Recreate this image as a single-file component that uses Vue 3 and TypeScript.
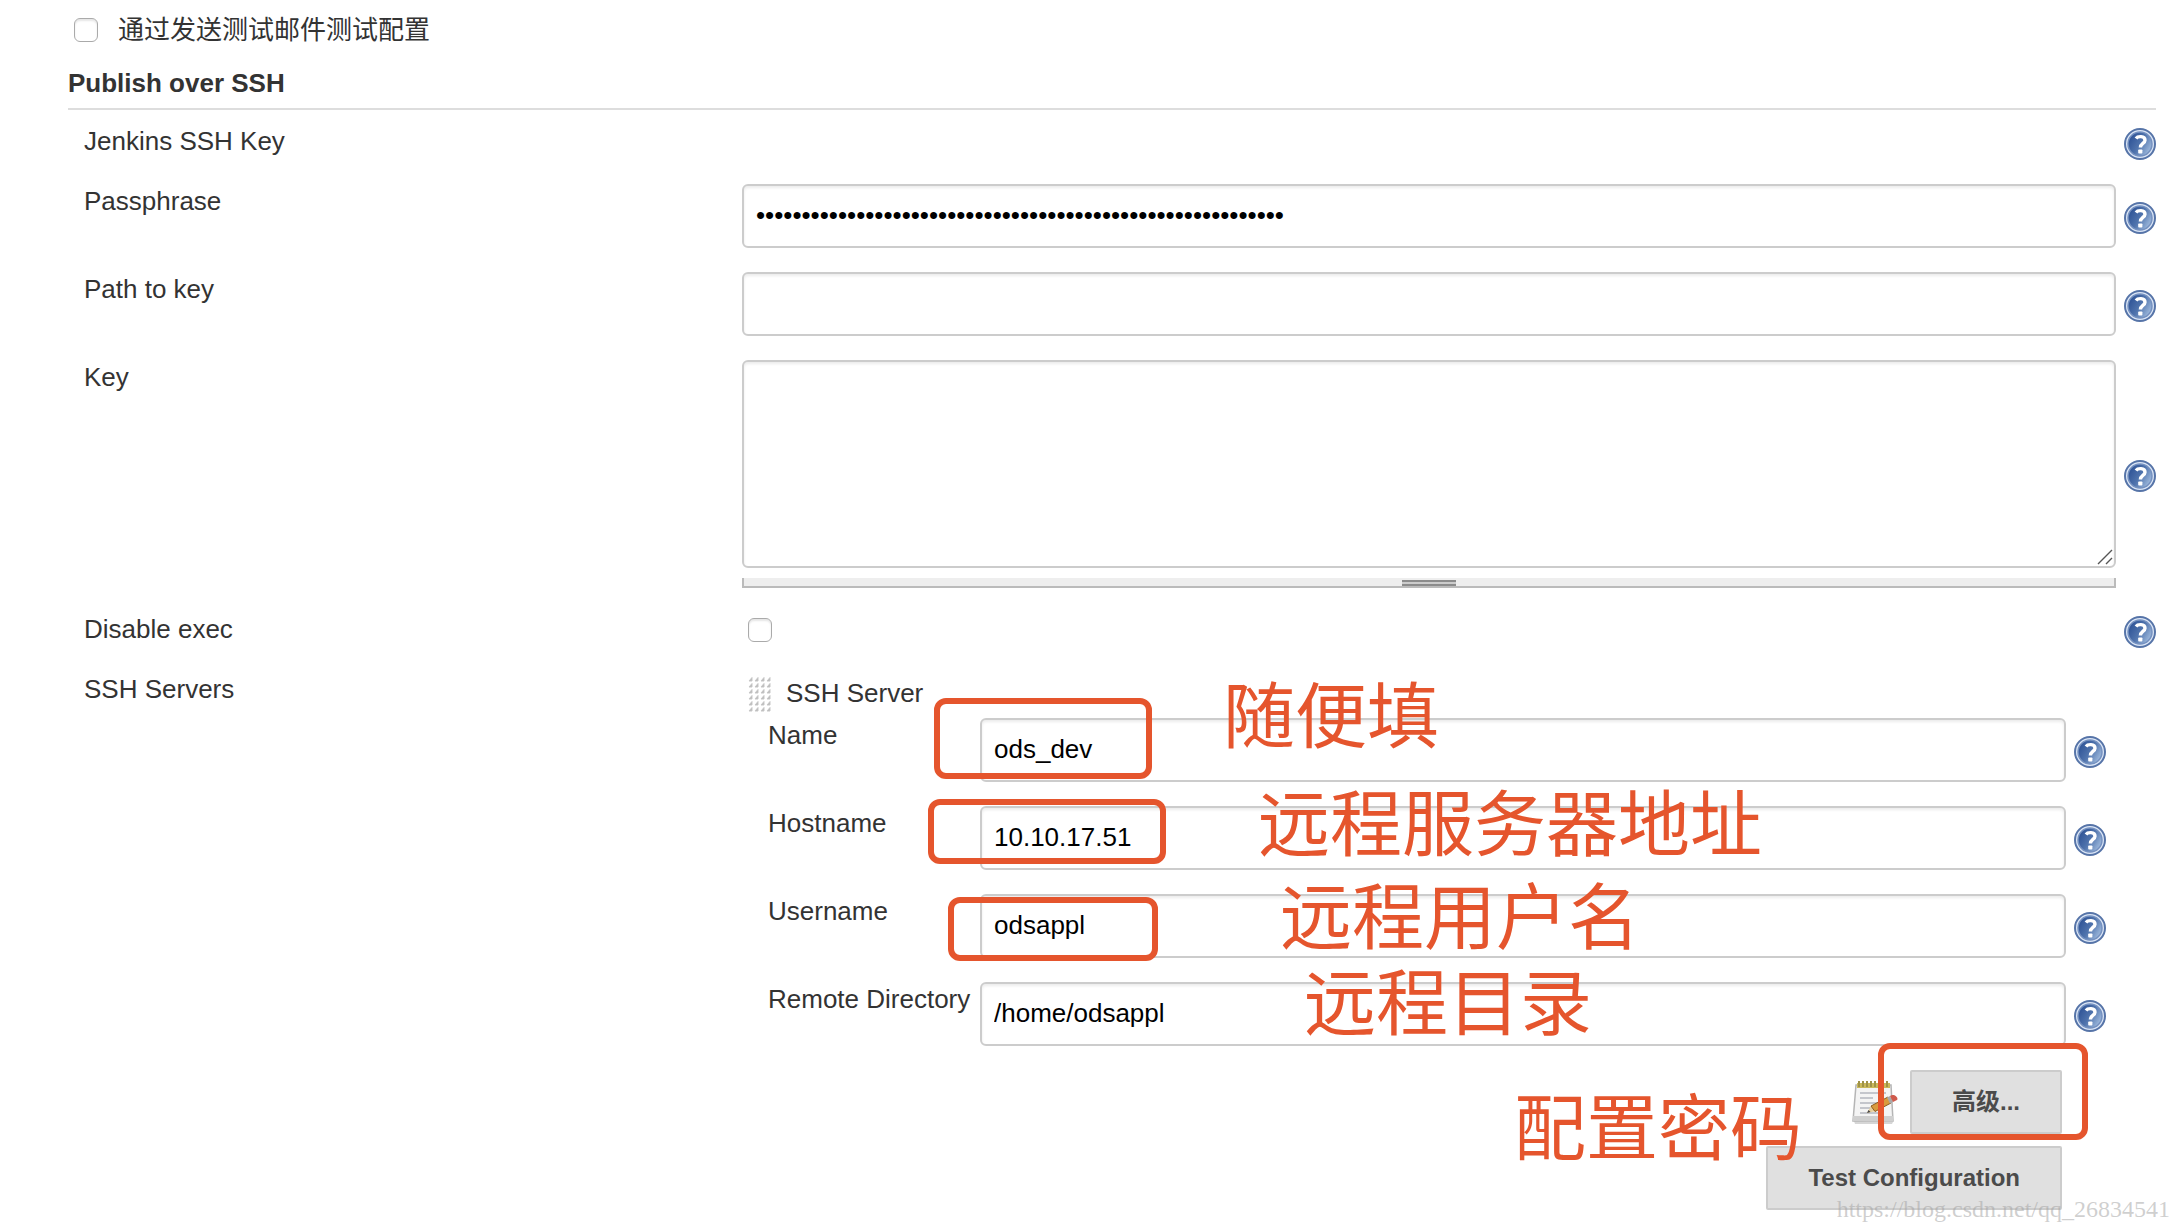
<script setup lang="ts">
import { h, reactive, ref } from 'vue'

interface ServerField {
  id: string
  label: string
  value: string
  note: string
  noteClass: string
  frameClass: string
}

const sendTestMail = ref(false)
const passphrase = ref('x'.repeat(58))
const keyPath = ref('')
const key = ref('')
const disableExec = ref(false)

const fields = reactive<ServerField[]>([
  { id: 'name', label: 'Name', value: 'ods_dev', note: '随便填', noteClass: 'note-name', frameClass: 'frame-name' },
  { id: 'hostname', label: 'Hostname', value: '10.10.17.51', note: '远程服务器地址', noteClass: 'note-host', frameClass: 'frame-host' },
  { id: 'username', label: 'Username', value: 'odsappl', note: '远程用户名', noteClass: 'note-user', frameClass: 'frame-user' },
  { id: 'remote-directory', label: 'Remote Directory', value: '/home/odsappl', note: '远程目录', noteClass: 'note-dir', frameClass: '' },
])

const HelpIcon = () =>
  h('svg', { viewBox: '0 0 32 32', width: 32, height: 32, 'aria-hidden': 'true' }, [
    h('circle', { cx: 16, cy: 16, r: 15, fill: '#dbe6f6', stroke: '#5674a8', 'stroke-width': 2 }),
    h('circle', { cx: 16, cy: 16, r: 12, fill: 'url(#help-fill)', stroke: '#7591c0', 'stroke-width': 1.5 }),
    h('path', {
      d: 'M12 10.4C13.6 8.2 21 7.4 21 12.2C21 15.6 16.4 15.4 16.4 19.6',
      fill: 'none',
      stroke: '#fff',
      'stroke-width': 3.4,
    }),
    h('rect', { x: 14.2, y: 21.4, width: 4.2, height: 4.2, rx: 0.8, fill: '#fff' }),
  ])
</script>

<template>
  <form class="page" @submit.prevent>
    <svg class="defs" width="0" height="0" aria-hidden="true">
      <defs>
        <linearGradient id="help-fill" x1="0" y1="0.2" x2="1" y2="0.8">
          <stop offset="0" stop-color="#2a4f93" />
          <stop offset="0.5" stop-color="#5074ad" />
          <stop offset="1" stop-color="#a9c3e3" />
        </linearGradient>
      </defs>
    </svg>

    <div class="mail-row">
      <input id="send-test" v-model="sendTestMail" class="tick" type="checkbox" />
      <label for="send-test">通过发送测试邮件测试配置</label>
    </div>

    <h2 class="section-title">Publish over SSH</h2>

    <div class="rows">
      <div class="row">
        <span class="label">Jenkins SSH Key</span>
        <span></span>
        <button class="help" type="button" aria-label="Help"><HelpIcon /></button>
      </div>
      <div class="row">
        <label class="label" for="passphrase">Passphrase</label>
        <input id="passphrase" v-model="passphrase" class="text" type="password" />
        <button class="help" type="button" aria-label="Help"><HelpIcon /></button>
      </div>
      <div class="row">
        <label class="label" for="key-path">Path to key</label>
        <input id="key-path" v-model="keyPath" class="text" type="text" />
        <button class="help" type="button" aria-label="Help"><HelpIcon /></button>
      </div>
      <div class="row">
        <label class="label" for="key">Key</label>
        <div class="area-wrap">
          <textarea id="key" v-model="key" class="text area"></textarea>
          <svg class="corner" viewBox="0 0 16 16" width="16" height="16" aria-hidden="true">
            <path d="M1 15L15 1M9 15L15 9" stroke="#555" stroke-width="1.4" fill="none" />
          </svg>
          <div class="resize-bar"><span class="resize-grip"></span></div>
        </div>
        <button class="help" type="button" aria-label="Help"><HelpIcon /></button>
      </div>
      <div class="row">
        <label class="label" for="disable-exec">Disable exec</label>
        <div class="tick-cell">
          <input id="disable-exec" v-model="disableExec" class="tick" type="checkbox" />
        </div>
        <button class="help" type="button" aria-label="Help"><HelpIcon /></button>
      </div>
      <div class="row">
        <span class="label">SSH Servers</span>
        <div class="server">
          <div class="server-head">
            <svg class="drag" viewBox="0 0 24 36" width="24" height="36" aria-hidden="true">
              <defs>
                <pattern id="drag-dots" width="6" height="6" patternUnits="userSpaceOnUse">
                  <path d="M1 5L4 1.5V5Z" fill="#b4b4b4" stroke="#c8c8c8" stroke-width="1" />
                </pattern>
              </defs>
              <rect width="24" height="36" fill="url(#drag-dots)" />
            </svg>
            <span>SSH Server</span>
          </div>
          <div class="fields">
            <div v-for="field in fields" :key="field.id" class="field">
              <label class="label-inner" :for="field.id">{{ field.label }}</label>
              <input :id="field.id" v-model="field.value" class="text" type="text" />
              <button class="help" type="button" aria-label="Help"><HelpIcon /></button>
              <span v-if="field.frameClass" class="frame" :class="field.frameClass"></span>
              <span class="note" :class="field.noteClass">{{ field.note }}</span>
            </div>
          </div>
          <div class="actions">
            <div class="advanced">
              <svg class="notepad" viewBox="0 0 48 48" width="48" height="48" aria-hidden="true">
                <path d="M4 43L43 44L42 46H5Z" fill="#bbb" opacity="0.6" />
                <path d="M6 7H41L43 43H3Z" fill="#f4f4f4" stroke="#b5b5b5" stroke-width="1.5" />
                <path d="M3 38H43V43H3Z" fill="#cfcfcf" />
                <path d="M7 5H40V10H7Z" fill="#c9b95a" />
                <path d="M9 3V9M13 3V9M17 3V9M21 3V9M25 3V9M29 3V9M33 3V9M37 3V9" stroke="#9f9248" stroke-width="2" />
                <path d="M10 15H36M10 20H23M10 25H30M10 30H20M10 35H30" stroke="#c4c6cc" stroke-width="2" />
                <path d="M17 35L21 28L26 33Z" fill="#e8cf9c" />
                <path d="M17 35L18.5 32L20.5 34Z" fill="#444" />
                <path d="M21 28L38 19L41 25L25 33.500Z" fill="#d99a3c" stroke="#8b5c22" stroke-width="1" />
                <path d="M37 19.500L40 18L43 24L40 25.500Z" fill="#a9a9a9" />
                <path d="M40 18C44 15 49 20 47 22L43 24Z" fill="#cf5a4c" />
              </svg>
              <button class="btn" type="button">高级...</button>
              <span class="frame frame-advanced"></span>
            </div>
            <button class="btn" type="button">Test Configuration</button>
            <span class="note note-password">配置密码</span>
          </div>
        </div>
        <span></span>
      </div>
    </div>
    <span class="watermark">https://blog.csdn.net/qq_26834541</span>
  </form>
</template>

<style>
body {
  margin: 0;
  background: #fff;
}
</style>

<style scoped>
.page,
.page * {
  box-sizing: border-box;
}

.page {
  position: relative;
  padding: 14px 26px 20px 68px;
  color: #333;
  font: 26px/30px "Liberation Sans", Arial, "Noto Sans CJK SC", sans-serif;
  overflow: hidden;
}

.defs {
  position: absolute;
}

.mail-row {
  display: flex;
  align-items: center;
  gap: 20px;
  height: 32px;
  padding-left: 6px;
}

.tick {
  appearance: none;
  display: block;
  flex: none;
  width: 24px;
  height: 24px;
  margin: 0;
  border: 1px solid #aaa;
  border-radius: 6px;
  background: #fff;
  box-shadow: inset 0 2px 2px rgba(0, 0, 0, 0.1);
}

.section-title {
  margin: 22px 0 14px;
  padding-bottom: 10px;
  border-bottom: 2px solid #ddd;
  font-size: 26px;
  line-height: 30px;
  font-weight: bold;
}

.rows {
  display: flex;
  flex-direction: column;
  gap: 24px;
}

.row {
  display: grid;
  grid-template-columns: 674px minmax(0, 1fr) 40px;
  min-height: 36px;
}

.label {
  padding: 2px 16px 0;
}

.text {
  display: block;
  width: 100%;
  height: 64px;
  margin: 0;
  padding: 14px 12px 16px;
  border: 2px solid #ccc;
  border-radius: 6px;
  background: #fff;
  box-shadow: inset 0 2px 3px rgba(0, 0, 0, 0.08);
  color: #000;
  font: inherit;
  outline: none;
}

.area-wrap {
  position: relative;
}

.area {
  height: 208px;
  resize: none;
}

.corner {
  position: absolute;
  right: 3px;
  top: 189px;
}

.resize-bar {
  display: flex;
  justify-content: center;
  height: 10px;
  margin-top: 10px;
  padding-top: 2px;
  border: 2px solid #bbb;
  border-top: 0;
  background: #eee;
}

.resize-grip {
  width: 54px;
  height: 6px;
  border: 2px solid #8c8c8c;
  border-width: 2px 0;
  background: #ccc;
}

.help {
  align-self: center;
  justify-self: end;
  width: 32px;
  height: 32px;
  margin: 4px 0 0;
  padding: 0;
  border: 0;
  background: none;
}

.help svg {
  display: block;
}

.tick-cell {
  padding: 6px;
}

.server-head {
  display: flex;
  gap: 14px;
  height: 46px;
  padding: 4px 6px 0;
}

.server-head span {
  padding-top: 2px;
}

.fields {
  display: flex;
  flex-direction: column;
  gap: 24px;
  padding: 0 10px 0 26px;
}

.field {
  position: relative;
  display: grid;
  grid-template-columns: 212px minmax(0, 1fr) 40px;
}

.label-inner {
  padding-top: 2px;
}

.actions {
  position: relative;
  display: flex;
  flex-direction: column;
  align-items: flex-end;
  gap: 12px;
  padding: 24px 54px 0 0;
}

.advanced {
  position: relative;
  display: flex;
  align-items: center;
  gap: 12px;
}

.btn {
  height: 64px;
  margin: 0;
  padding: 0 40px;
  border: 2px solid #ccc;
  border-radius: 2px;
  background: #e0e0e0;
  color: #4b4b4b;
  font: bold 24px/30px "Liberation Sans", Arial, "Noto Sans CJK SC", sans-serif;
}

.frame {
  position: absolute;
  border: 6px solid #e5552d;
  border-radius: 12px;
  pointer-events: none;
}

.frame-name {
  left: 166px;
  top: -20px;
  width: 218px;
  height: 81px;
}

.frame-host {
  left: 160px;
  top: -7px;
  width: 238px;
  height: 65px;
}

.frame-user {
  left: 180px;
  top: 3px;
  width: 210px;
  height: 64px;
}

.frame-advanced {
  right: -26px;
  top: -27px;
  width: 210px;
  height: 97px;
}

.note {
  position: absolute;
  color: #e5552d;
  font-family: "Noto Sans CJK SC", sans-serif;
  font-size: 72px;
  line-height: 72px;
  white-space: nowrap;
  pointer-events: none;
}

.note-name {
  left: 455px;
  top: -43px;
}

.note-host {
  left: 490px;
  top: -23px;
}

.note-user {
  left: 512px;
  top: -18px;
}

.note-dir {
  left: 536px;
  top: -20px;
}

.note-password {
  right: 314px;
  top: 41px;
}

.watermark {
  position: absolute;
  right: 12px;
  bottom: 6px;
  color: rgba(160, 160, 160, 0.5);
  font: 24px/30px "Liberation Serif", "Times New Roman", serif;
}
</style>
